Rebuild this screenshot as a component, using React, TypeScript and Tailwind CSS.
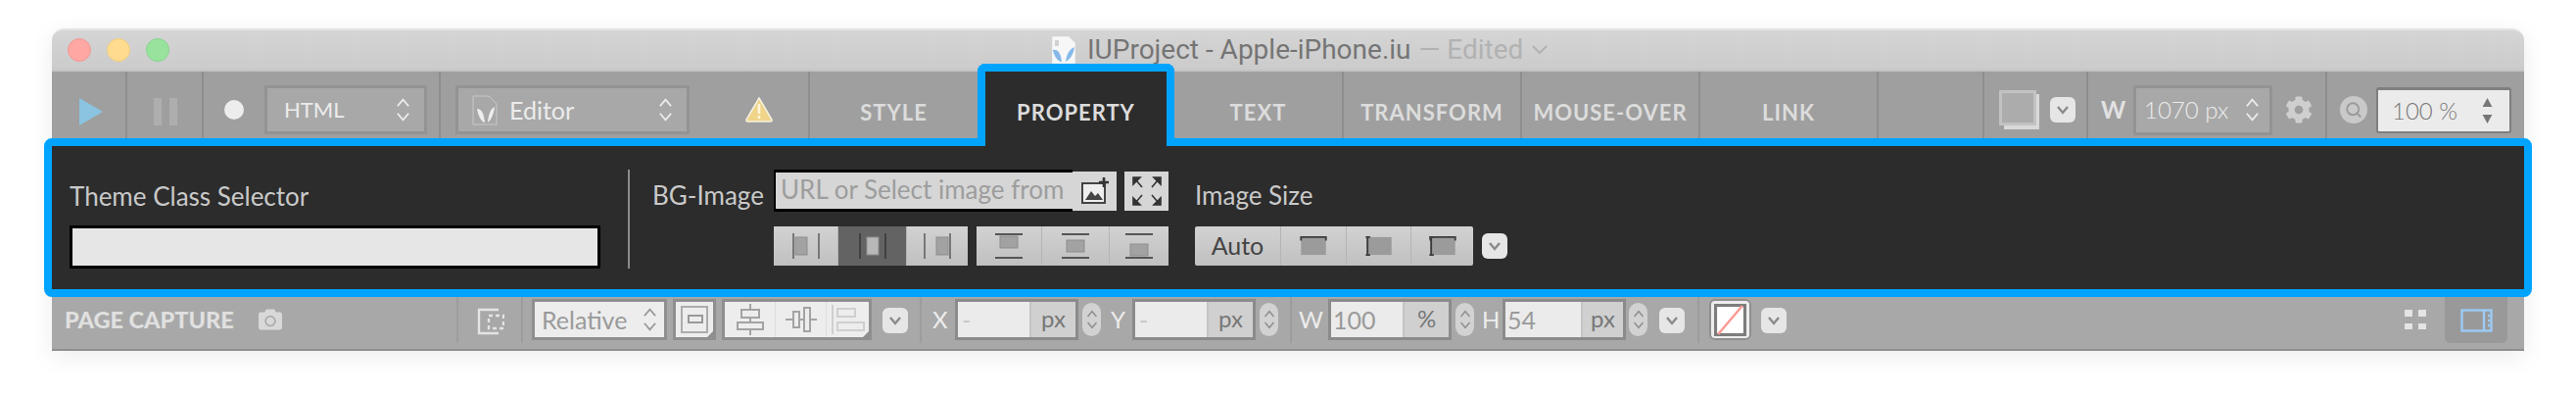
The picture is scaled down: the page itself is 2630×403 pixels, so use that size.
import { FaCamera, FaCog } from 'react-icons/fa';
import { Search } from 'lucide-react';

/* ── Small glyphs ─────────────────────────────── */
const UpDown = ({ className = '' }: { className?: string }) => (
  <svg viewBox="0 0 16 26" className={className} fill="none" stroke="currentColor" strokeWidth="2">
    <path d="M2 9 8 2l6 7M2 17l6 7 6-7" />
  </svg>
);

const DownButton = ({ className = '' }: { className?: string }) => (
  <div className={`w-[26px] h-[26px] rounded-[6px] bg-[#e6e6e6] flex items-center justify-center shrink-0 ${className}`}>
    <svg viewBox="0 0 14 10" className="w-[14px] h-[10px]" fill="none" stroke="#8a8a8a" strokeWidth="2.4">
      <path d="M2 2l5 6 5-6" />
    </svg>
  </div>
);

const Stepper = ({ className = '' }: { className?: string }) => (
  <div className={`w-[19px] h-[34px] rounded-full bg-[#d2d2d2] text-[#8f8f8f] flex items-center justify-center shrink-0 ${className}`}>
    <UpDown className="w-[12px] h-[28px]" />
  </div>
);

const Corner = () => (
  <span className="absolute right-0 bottom-0 w-0 h-0 border-l-[6px] border-t-[6px] border-l-transparent border-t-transparent border-r-[0px] border-b-[6px] border-b-[#8f8f8f]" />
);

const PosIcon = ({ mode, kind }: { mode: string; kind: 'h' | 'v' }) => {
  const stroke = mode === 'active' ? '#333' : '#555';
  if (kind === 'h') {
    const x = mode === 'a' ? 3 : mode === 'c' || mode === 'active' ? 8 : 13;
    return (
      <svg viewBox="0 0 28 26" className="w-[28px] h-[26px]">
        <path d="M1 0v26M27 0v26" stroke={stroke} strokeWidth="1.4" />
        <rect x={x} y="4" width="12" height="18" fill={mode === 'active' ? '#b8b8b8' : '#a2a2a2'} stroke="#8d8d8d" />
      </svg>
    );
  }
  const y = mode === 'a' ? 3 : mode === 'c' ? 7 : 11;
  return (
    <svg viewBox="0 0 28 26" className="w-[28px] h-[26px]">
      <path d="M0 1h28M0 25h28" stroke="#555" strokeWidth="2" />
      <rect x="5" y={y} width="18" height="12" fill="#a2a2a2" stroke="#8d8d8d" />
    </svg>
  );
};

const SizeIcon = ({ top, left }: { top?: boolean; left?: boolean }) => (
  <svg viewBox="0 0 30 22" className="w-[28px] h-[20px]">
    <rect x="1" y="1" width="28" height="20" fill="#9b9b9b" />
    {top && <path d="M0 1h30M1 0v5M29 0v5" stroke="#3c3c3c" strokeWidth="2" />}
    {left && <path d="M2 0v22M0 1h5M0 21h5" stroke="#3c3c3c" strokeWidth="2" />}
  </svg>
);

const AlignIcon = ({ mode }: { mode: 'center' | 'middle' | 'left' }) => {
  if (mode === 'middle') {
    return (
      <svg viewBox="0 0 32 26" className="w-[32px] h-[26px]" fill="none" stroke="#a3a3a3" strokeWidth="2">
        <path d="M0 13h32" />
        <rect x="8" y="5" width="6" height="16" fill="#ededed" />
        <rect x="19" y="1" width="6" height="24" fill="#ededed" />
      </svg>
    );
  }
  if (mode === 'left') {
    return (
      <svg viewBox="0 0 34 30" className="w-[34px] h-[30px]" fill="none" stroke="#cfcfcf" strokeWidth="2">
        <path d="M1 0v30" />
        <rect x="6" y="4" width="18" height="8" />
        <rect x="6" y="18" width="27" height="8" />
      </svg>
    );
  }
  return (
    <svg viewBox="0 0 28 32" className="w-[28px] h-[32px]" fill="none" stroke="#a3a3a3" strokeWidth="2">
      <path d="M14 0v32" />
      <rect x="5" y="6" width="18" height="8" fill="#ededed" />
      <rect x="1" y="19" width="26" height="7" fill="#ededed" />
    </svg>
  );
};

/* ── Toolbar pieces ───────────────────────────── */
const tabText = 'text-[22px] leading-[24px] font-bold tracking-[1px] text-[#dcdcdc]';

const Tab = ({ label, width, last = true }: { label: string; width: string; last?: boolean }) => (
  <div className={`${width} ${last ? 'border-r-2 border-[#8e8e8e]' : ''} pt-[30px] flex justify-center shrink-0`}>
    <span className={`${tabText} whitespace-nowrap`}>{label}</span>
  </div>
);

const Select = ({ label, width, size, icon }: { label: string; width: string; size: string; icon?: React.ReactNode }) => (
  <div className={`${width} h-[50px] border-[3px] border-[#939393] bg-[#a8a8a8] flex items-center text-[#ececec] shrink-0`}>
    {icon}
    <span className={`${size} flex-1 leading-none`}>{label}</span>
    <UpDown className="w-[15px] h-[26px] mr-[14px]" />
  </div>
);

const Segment = ({ width, active, children }: { width: string; active?: boolean; children: React.ReactNode }) => (
  <div className={`${width} h-full flex items-center justify-center border-r border-[#b4b4b4] last:border-r-0 ${active ? 'bg-[#636363]' : ''}`}>
    {children}
  </div>
);

const NumberField = ({ value, unit, width, split, dash }: { value: string; unit: string; width: string; split: string; dash?: boolean }) => (
  <div className={`${width} h-[42px] border-[3px] border-[#8b8b8b] bg-[#ebebeb] flex shrink-0`}>
    <span className={`flex-1 pl-[2px] text-[25px] leading-[36px] ${dash ? 'text-[#c8c8c8] pl-[4px]' : 'text-[#9a9a9a]'}`}>{value}</span>
    <span className={`${split} bg-[#d0d0d0] text-[#777] text-[24px] leading-[34px] text-center border-l-2 border-[#c4c4c4]`}>{unit}</span>
  </div>
);

const BarLabel = ({ width, className = '', children }: { width: string; className?: string; children: string }) => (
  <span className={`${width} text-center text-[24px] text-[#ececec] shrink-0 ${className}`}>{children}</span>
);

const Sep = ({ className = '' }: { className?: string }) => (
  <div className={`w-[2px] h-[47px] bg-[#9d9d9d] -mt-[2px] shrink-0 ${className}`} />
);

export default function App() {
  return (
    <div className="min-h-[403px] bg-white pt-[29px] pl-[53px] font-['Lato',sans-serif] overflow-hidden">
      <div className="w-[2524px] rounded-t-[12px] shadow-[0_6px_24px_rgba(0,0,0,0.08)]">
        {/* Title bar */}
        <div className="h-[44px] rounded-t-[12px] border-t-2 border-b-2 border-t-[#e4e4e4] border-b-[#c4c4c4] bg-gradient-to-b from-[#d5d5d5] to-[#cbcbcb] relative flex items-center">
          <div className="flex gap-[16px] ml-[16px]">
            <span className="w-[24px] h-[24px] rounded-full bg-[#ffa7a2] border border-[#f09a96]" />
            <span className="w-[24px] h-[24px] rounded-full bg-[#fedb8f] border border-[#f0cd84]" />
            <span className="w-[24px] h-[24px] rounded-full bg-[#97e39c] border border-[#8ad290]" />
          </div>
          <div className="ml-[901px] flex items-center font-['Roboto',sans-serif] text-[28px] leading-none whitespace-nowrap">
            <svg viewBox="0 0 24 28" className="w-[24px] h-[28px] mr-[12px]">
              <path d="M0 0h17l7 7v21H0z" fill="#f7f7f7" stroke="#dadada" strokeWidth=".6" />
              <path d="M4 4v6M6 4v6" stroke="#999" strokeWidth=".8" />
              <path d="M1 14c5-1 8 3 9 12-4 0-8-6-9-12zM23 11c-5 2-8 7-9 15 4-2 8-7 9-15z" fill="#86b8ea" />
            </svg>
            <span className="text-[#757575]">IUProject - Apple-iPhone.iu</span>
            <span className="text-[#b2b2b2] ml-[8px]">— Edited</span>
            <svg viewBox="0 0 16 10" className="w-[16px] h-[10px] ml-[9px]" fill="none" stroke="#b2b2b2" strokeWidth="2">
              <path d="M1 1l7 7 7-7" />
            </svg>
          </div>
        </div>

        {/* Top toolbar */}
        <div className="h-[68px] bg-[#9f9f9f] flex">
          <div className="w-[77px] border-r-2 border-[#8e8e8e] pt-[14px] pl-[28px] flex items-center shrink-0">
            <svg viewBox="0 0 24 28" className="w-[24px] h-[28px]"><path d="M0 0l24 14L0 28z" fill="#8ac4e1" /></svg>
          </div>
          <div className="w-[78px] border-r-2 border-[#8e8e8e] pt-[14px] pl-[27px] flex items-center gap-[8px] shrink-0">
            <span className="w-[8px] h-[28px] bg-[#aeaeae]" />
            <span className="w-[8px] h-[28px] bg-[#aeaeae]" />
          </div>
          <div className="w-[242px] border-r-2 border-[#8e8e8e] pt-[10px] pl-[21px] flex items-center shrink-0">
            <span className="w-[20px] h-[20px] rounded-full bg-[#ededed] mr-[21px] shrink-0" />
            <Select label="HTML" width="w-[166px]" size="text-[22px]" icon={<span className="w-[17px]" />} />
          </div>
          <div className="w-[377px] border-r-2 border-[#8e8e8e] pt-[10px] pl-[15px] flex items-center shrink-0">
            <Select
              label="Editor"
              width="w-[239px]"
              size="text-[25px]"
              icon={<span className="ml-[14px] mr-[12px]"><svg viewBox="0 0 26 31" className="w-[26px] h-[31px]"><path d="M1 1h16l8 8v21H1z" fill="none" stroke="#c8c8c8" /><path d="M5 14c5 0 7 5 8 14-3 0-7-7-8-14zM23 12c-4 2-6 7-7 16 3-2 6-8 7-16z" fill="#eee" /></svg></span>}
            />
            <svg viewBox="0 0 28 26" className="w-[28px] h-[26px] ml-[57px] shrink-0">
              <path d="M14 1 27 23a1.5 1.5 0 0 1-1 2H2a1.5 1.5 0 0 1-1-2z" fill="#efd48a" stroke="#f6f1e1" strokeWidth="1.5" />
              <path d="M14 7v10M14 19v3" stroke="#fff5d8" strokeWidth="2.6" />
            </svg>
          </div>
          <Tab label="STYLE" width="w-[171px]" last={false} />
          {/* Selected tab, cut into the blue outline of the panel */}
          <div className="w-[201px] h-[84px] -mt-[8px] border-8 border-b-0 border-[#00a4ff] rounded-t-[8px] bg-[#2c2c2c] relative z-10 pt-[30px] flex justify-center shrink-0">
            <span className={`${tabText} whitespace-nowrap`}>PROPERTY</span>
          </div>
          <Tab label="TEXT" width="w-[173px]" />
          <Tab label="TRANSFORM" width="w-[182px]" />
          <Tab label="MOUSE-OVER" width="w-[182px]" />
          <Tab label="LINK" width="w-[182px]" />
          <div className="w-[108px] border-r-2 border-[#8e8e8e] shrink-0" />
          <div className="w-[106px] border-r-2 border-[#8e8e8e] pt-[10px] pl-[15px] flex items-center shrink-0">
            <div className="relative w-[41px] h-[40px] shrink-0">
              <div className="absolute right-0 bottom-0 w-[36px] h-[36px] bg-[#d9d9d9]" />
              <div className="absolute left-0 top-0 w-[38px] h-[36px] bg-[#acacac] border-[3px] border-[#c2c2c2]" />
            </div>
            <DownButton className="ml-[11px]" />
          </div>
          <div className="w-[244px] border-r-2 border-[#8e8e8e] pt-[10px] pl-[13px] flex items-center shrink-0">
            <span className="w-[23px] text-[24px] font-bold text-[#e2e2e2] text-center shrink-0">W</span>
            <div className="w-[142px] h-[51px] ml-[10px] border-[3px] border-[#939393] bg-[#a8a8a8] flex items-center text-[#ececec] shrink-0">
              <span className="ml-[8px] flex-1 text-[24px] leading-none font-light whitespace-nowrap">1070 px</span>
              <UpDown className="w-[15px] h-[26px] mr-[10px]" />
            </div>
            <FaCog className="w-[28px] h-[28px] ml-[13px] text-[#cfcfcf] shrink-0" />
          </div>
          <div className="w-[201px] pt-[10px] pl-[13px] flex items-center shrink-0">
            <div className="w-[28px] h-[28px] rounded-full bg-[#c9c9c9] flex items-center justify-center shrink-0">
              <Search className="w-[18px] h-[18px] text-[#9a9a9a]" strokeWidth={2.5} />
            </div>
            <div className="w-[138px] h-[47px] ml-[9px] rounded-[3px] border-2 border-t-[3px] border-[#7f7f7f] bg-[#ebebeb] flex items-center shrink-0">
              <span className="ml-[14px] flex-1 text-[24px] font-light text-[#777] leading-none">100 %</span>
              <div className="flex flex-col gap-[8px] mr-[17px]">
                <svg viewBox="0 0 12 11" className="w-[11px] h-[9px]"><path d="M6 0l6 11H0z" fill="#777" /></svg>
                <svg viewBox="0 0 12 11" className="w-[11px] h-[9px]"><path d="M6 11 12 0H0z" fill="#777" /></svg>
              </div>
            </div>
          </div>
        </div>

        {/* Highlighted property panel */}
        <div className="-mx-2 h-[162px] border-8 border-[#00a4ff] rounded-[8px] bg-[#2c2c2c] flex pt-[24px] pl-[18px] relative">
          <div className="w-[542px] h-[101px] flex flex-col justify-between shrink-0">
            <span className="text-[26px] leading-[30px] mt-[12px] text-[#c9c9c9]">Theme Class Selector</span>
            <div className="h-[44px] border-[3px] border-black bg-[#e6e6e6]" />
          </div>
          <div className="w-[2px] h-[101px] bg-[#8c8c8c] ml-[28px] shrink-0" />
          <span className="ml-[23px] w-[124px] text-[26px] leading-[30px] mt-[11px] text-[#c9c9c9] shrink-0">BG-Image</span>
          <div className="flex flex-col shrink-0">
            <div className="h-[43px] flex items-center">
              <div className="w-[305px] h-[43px] border-y-[3px] border-l-2 border-black bg-[#d6d6d6] pl-[5px] text-[26px] leading-[34px] text-[#9d9d9d] whitespace-nowrap overflow-hidden">
                URL or Select image from
              </div>
              <div className="w-[45px] h-[40px] bg-[#d6d6d6] flex items-center justify-center">
                <svg viewBox="0 0 28 28" className="w-[28px] h-[28px]">
                  <rect x="1" y="6" width="23" height="20" fill="#eee" stroke="#444" strokeWidth="2" />
                  <path d="M4 23l6-9 4 5 3-3 5 7z" fill="#444" />
                  <path d="M23 0v10M18 5h10" stroke="#333" strokeWidth="2.6" />
                </svg>
              </div>
              <div className="w-[45px] h-[40px] ml-[8px] bg-[#d6d6d6] flex items-center justify-center">
                <svg viewBox="0 0 30 30" className="w-[30px] h-[30px]" fill="#333" stroke="#333" strokeWidth="1.6">
                  <path d="M1 1h7L1 8zM29 1h-7l7 7zM1 29h7l-7-7zM29 29h-7l7-7z" />
                  <path d="M4 4l6 7M26 4l-6 7M4 26l6-7M26 26l-6-7" fill="none" />
                </svg>
              </div>
            </div>
            <div className="h-[40px] mt-[15px] flex">
              <div className="w-[198px] h-full bg-gradient-to-b from-[#d2d2d2] to-[#c0c0c0] flex">
                <Segment width="w-[66px]"><PosIcon mode="a" kind="h" /></Segment>
                <Segment width="w-[70px]" active><PosIcon mode="active" kind="h" /></Segment>
                <Segment width="w-[62px]"><PosIcon mode="b" kind="h" /></Segment>
              </div>
              <div className="w-[196px] h-full ml-[9px] bg-gradient-to-b from-[#d2d2d2] to-[#c0c0c0] flex">
                <Segment width="w-[67px]"><PosIcon mode="a" kind="v" /></Segment>
                <Segment width="w-[69px]"><PosIcon mode="c" kind="v" /></Segment>
                <Segment width="w-[60px]"><PosIcon mode="b" kind="v" /></Segment>
              </div>
            </div>
          </div>
          <div className="ml-[27px] flex flex-col shrink-0">
            <span className="text-[26px] leading-[30px] mt-[11px] text-[#c9c9c9]">Image Size</span>
            <div className="h-[40px] mt-[17px] flex items-center">
              <div className="w-[284px] h-full bg-gradient-to-b from-[#d2d2d2] to-[#c0c0c0] rounded-[2px] flex">
                <Segment width="w-[88px]"><span className="text-[25px] text-[#444]">Auto</span></Segment>
                <Segment width="w-[67px]"><SizeIcon top /></Segment>
                <Segment width="w-[66px]"><SizeIcon left /></Segment>
                <Segment width="w-[63px]"><SizeIcon top left /></Segment>
              </div>
              <DownButton className="ml-[9px]" />
            </div>
          </div>
        </div>

        {/* Bottom bar */}
        <div className="h-[55px] bg-[#a8a8a8] border-b-2 border-[#8f8f8f] flex items-start pt-[2px]">
          <span className="ml-[13px] w-[172px] h-[42px] text-[23.5px] leading-[42px] font-black text-[#e0e0e0] whitespace-nowrap shrink-0">PAGE CAPTURE</span>
          <FaCamera className="w-[28px] h-[24px] ml-[24px] mt-[9px] text-[#d8d8d8] shrink-0" />
          <Sep className="ml-[176px]" />
          <svg viewBox="0 0 28 28" className="w-[28px] h-[28px] ml-[19px] mt-[9px] shrink-0" fill="none" stroke="#e4e4e4" strokeWidth="2.4">
            <path d="M22 2H2v24h20" />
            <path d="M12 8h15v13H12z" strokeDasharray="4 3" />
          </svg>
          <Sep className="ml-[17px]" />
          <div className="w-[138px] h-[42px] ml-[9px] border-[3px] border-[#8f8f8f] bg-[#ededed] flex items-center text-[#9a9a9a] shrink-0">
            <span className="flex-1 pl-[7px] text-[25px] leading-none">Relative</span>
            <UpDown className="w-[15px] h-[28px] mr-[7px]" />
          </div>
          <div className="w-[44px] h-[42px] ml-[6px] border-[3px] border-[#8f8f8f] bg-[#ededed] flex items-center justify-center relative shrink-0">
            <svg viewBox="0 0 28 28" className="w-[28px] h-[28px]" fill="none" stroke="#acacac" strokeWidth="2">
              <rect x="1" y="1" width="26" height="26" />
              <rect x="8" y="10" width="14" height="7" stroke="#999" />
            </svg>
            <Corner />
          </div>
          <div className="w-[153px] h-[42px] ml-[6px] border-[3px] border-[#8f8f8f] bg-[#ededed] flex relative shrink-0">
            <div className="w-[52px] flex items-center justify-center border-r border-[#dedede]"><AlignIcon mode="center" /></div>
            <div className="w-[52px] flex items-center justify-center border-r border-[#dedede]"><AlignIcon mode="middle" /></div>
            <div className="flex-1 flex items-center justify-center"><AlignIcon mode="left" /></div>
            <Corner />
          </div>
          <DownButton className="ml-[11px] mt-[9px]" />
          <Sep className="ml-[12px]" />
          <BarLabel width="w-[15px]" className="ml-[11px] leading-[42px]">X</BarLabel>
          <div className="ml-[8px]"><NumberField value="-" unit="px" width="w-[126px]" split="w-[47px]" dash /></div>
          <Stepper className="ml-[4px] mt-[4px]" />
          <BarLabel width="w-[15px]" className="ml-[10px] leading-[42px]">Y</BarLabel>
          <div className="ml-[7px]"><NumberField value="-" unit="px" width="w-[126px]" split="w-[47px]" dash /></div>
          <Stepper className="ml-[4px] mt-[4px]" />
          <Sep className="ml-[12px]" />
          <BarLabel width="w-[22px]" className="ml-[7px] leading-[42px]">W</BarLabel>
          <div className="ml-[8px]"><NumberField value="100" unit="%" width="w-[126px]" split="w-[47px]" /></div>
          <Stepper className="ml-[4px] mt-[4px]" />
          <BarLabel width="w-[16px]" className="ml-[8px] leading-[42px]">H</BarLabel>
          <div className="ml-[5px]"><NumberField value="54" unit="px" width="w-[126px]" split="w-[43px]" /></div>
          <Stepper className="ml-[3px] mt-[4px]" />
          <DownButton className="ml-[12px] mt-[9px]" />
          <Sep className="ml-[13px]" />
          <div className="w-[43px] h-[42px] ml-[10px] rounded-[6px] bg-[#ededed] border-2 border-[#8f8f8f] flex items-center justify-center shrink-0">
            <svg viewBox="0 0 32 32" className="w-[33px] h-[33px]">
              <rect x="1.5" y="1.5" width="29" height="29" fill="#fff" stroke="#7d7d7d" strokeWidth="3" />
              <path d="M28 2 4 30" stroke="#fb9a92" strokeWidth="2.4" />
            </svg>
          </div>
          <DownButton className="ml-[10px] mt-[9px]" />
          <div className="ml-[631px] mt-[11px] w-[22px] h-[20px] grid grid-cols-2 gap-x-[6px] gap-y-[7px] shrink-0">
            <span className="bg-[#e4e4e4]" />
            <span className="bg-[#e4e4e4]" />
            <span className="bg-[#e4e4e4]" />
            <span className="bg-[#e4e4e4]" />
          </div>
          <div className="w-[64px] h-[47px] ml-[19px] -mt-[2px] rounded-b-[6px] bg-[#999999] flex items-center justify-center shrink-0">
            <svg viewBox="0 0 33 24" className="w-[33px] h-[24px]" fill="none" stroke="#9ccbf5" strokeWidth="2.4">
              <rect x="1.5" y="1.5" width="30" height="21" />
              <path d="M24 2v20" />
              <path d="M28 7h2M28 12h2M28 17h2" />
            </svg>
          </div>
        </div>
      </div>
    </div>
  );
}
